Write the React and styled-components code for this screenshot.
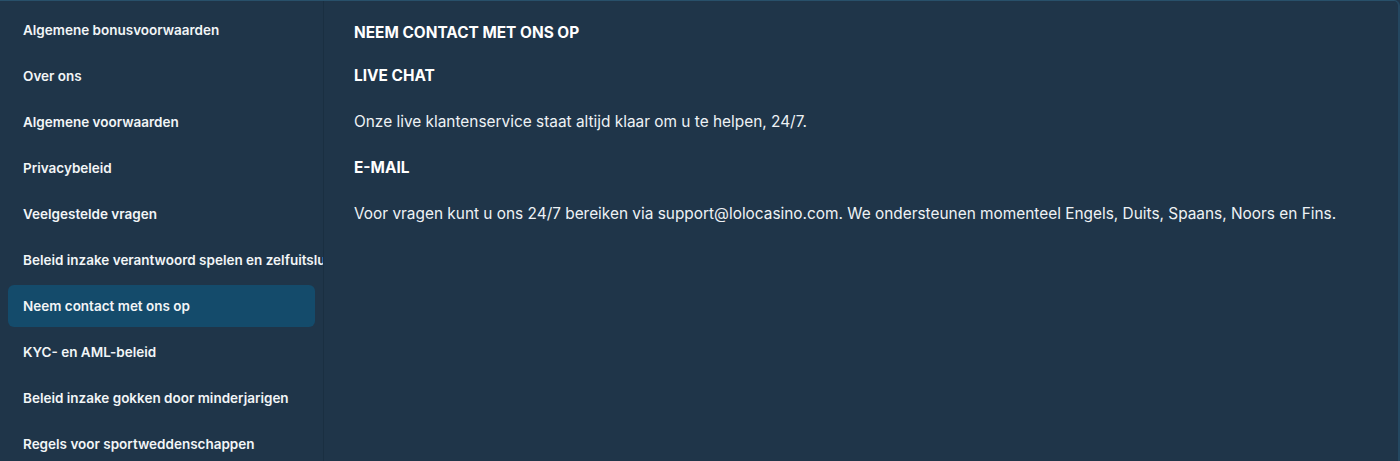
import React from "react";
import styled, { createGlobalStyle } from "styled-components";

const Global = createGlobalStyle`
  html, body { margin: 0; padding: 0; background: #1f3549; }
  body { font-family: Inter, "Noto Sans", Arial, sans-serif; -webkit-font-smoothing: antialiased; }
  * { box-sizing: border-box; }
`;

const Panel = styled.div`
  display: flex;
  height: 461px;
  background: #1f3549;
  border-top: 1px solid #28506a;
  border-right: 2px solid #244760;
  border-top-right-radius: 6px;
  overflow: hidden;
`;

const Sidebar = styled.nav`
  width: 324px;
  flex: none;
  border-right: 1px solid #1a2f41;
  padding: 8px 8px 0;
  display: flex;
  flex-direction: column;
  gap: 4px;
  overflow: hidden;
`;

const NavItem = styled.div`
  flex: none;
  height: 42px;
  display: flex;
  align-items: center;
  padding-left: 15px;
  border-radius: 6px;
  font-size: 13.5px;
  font-weight: 600;
  color: #f2f5f7;
  white-space: nowrap;
  margin-right: ${(p) => (p.$active ? "0" : "-9px")};
  background: ${(p) => (p.$active ? "#144b6b" : "transparent")};
`;

const Content = styled.main`
  flex: 1;
  padding: 11px 30px 0;
  display: flex;
  flex-direction: column;
`;

const Heading = styled.h2`
  margin: 0;
  flex: none;
  height: ${(p) => (p.$first ? "40px" : "46px")};
  display: flex;
  align-items: center;
  font-size: 15.4px;
  font-weight: 700;
  color: #ffffff;
`;

const Text = styled.p`
  margin: 0;
  flex: none;
  height: 46px;
  display: flex;
  align-items: center;
  font-size: 15.4px;
  font-weight: 400;
  color: #eef2f5;
`;

const items = [
  "Algemene bonusvoorwaarden",
  "Over ons",
  "Algemene voorwaarden",
  "Privacybeleid",
  "Veelgestelde vragen",
  "Beleid inzake verantwoord spelen en zelfuitsluiting",
  "Neem contact met ons op",
  "KYC- en AML-beleid",
  "Beleid inzake gokken door minderjarigen",
  "Regels voor sportweddenschappen",
];

export default function App() {
  return (
    <>
      <Global />
      <Panel>
        <Sidebar>
          {items.map((t) => (
            <NavItem key={t} $active={t === "Neem contact met ons op"}>
              {t}
            </NavItem>
          ))}
        </Sidebar>
        <Content>
          <Heading $first>NEEM CONTACT MET ONS OP</Heading>
          <Heading>LIVE CHAT</Heading>
          <Text>Onze live klantenservice staat altijd klaar om u te helpen, 24/7.</Text>
          <Heading>E-MAIL</Heading>
          <Text>
            Voor vragen kunt u ons 24/7 bereiken via support@lolocasino.com. We ondersteunen momenteel Engels, Duits, Spaans, Noors en Fins.
          </Text>
        </Content>
      </Panel>
    </>
  );
}
